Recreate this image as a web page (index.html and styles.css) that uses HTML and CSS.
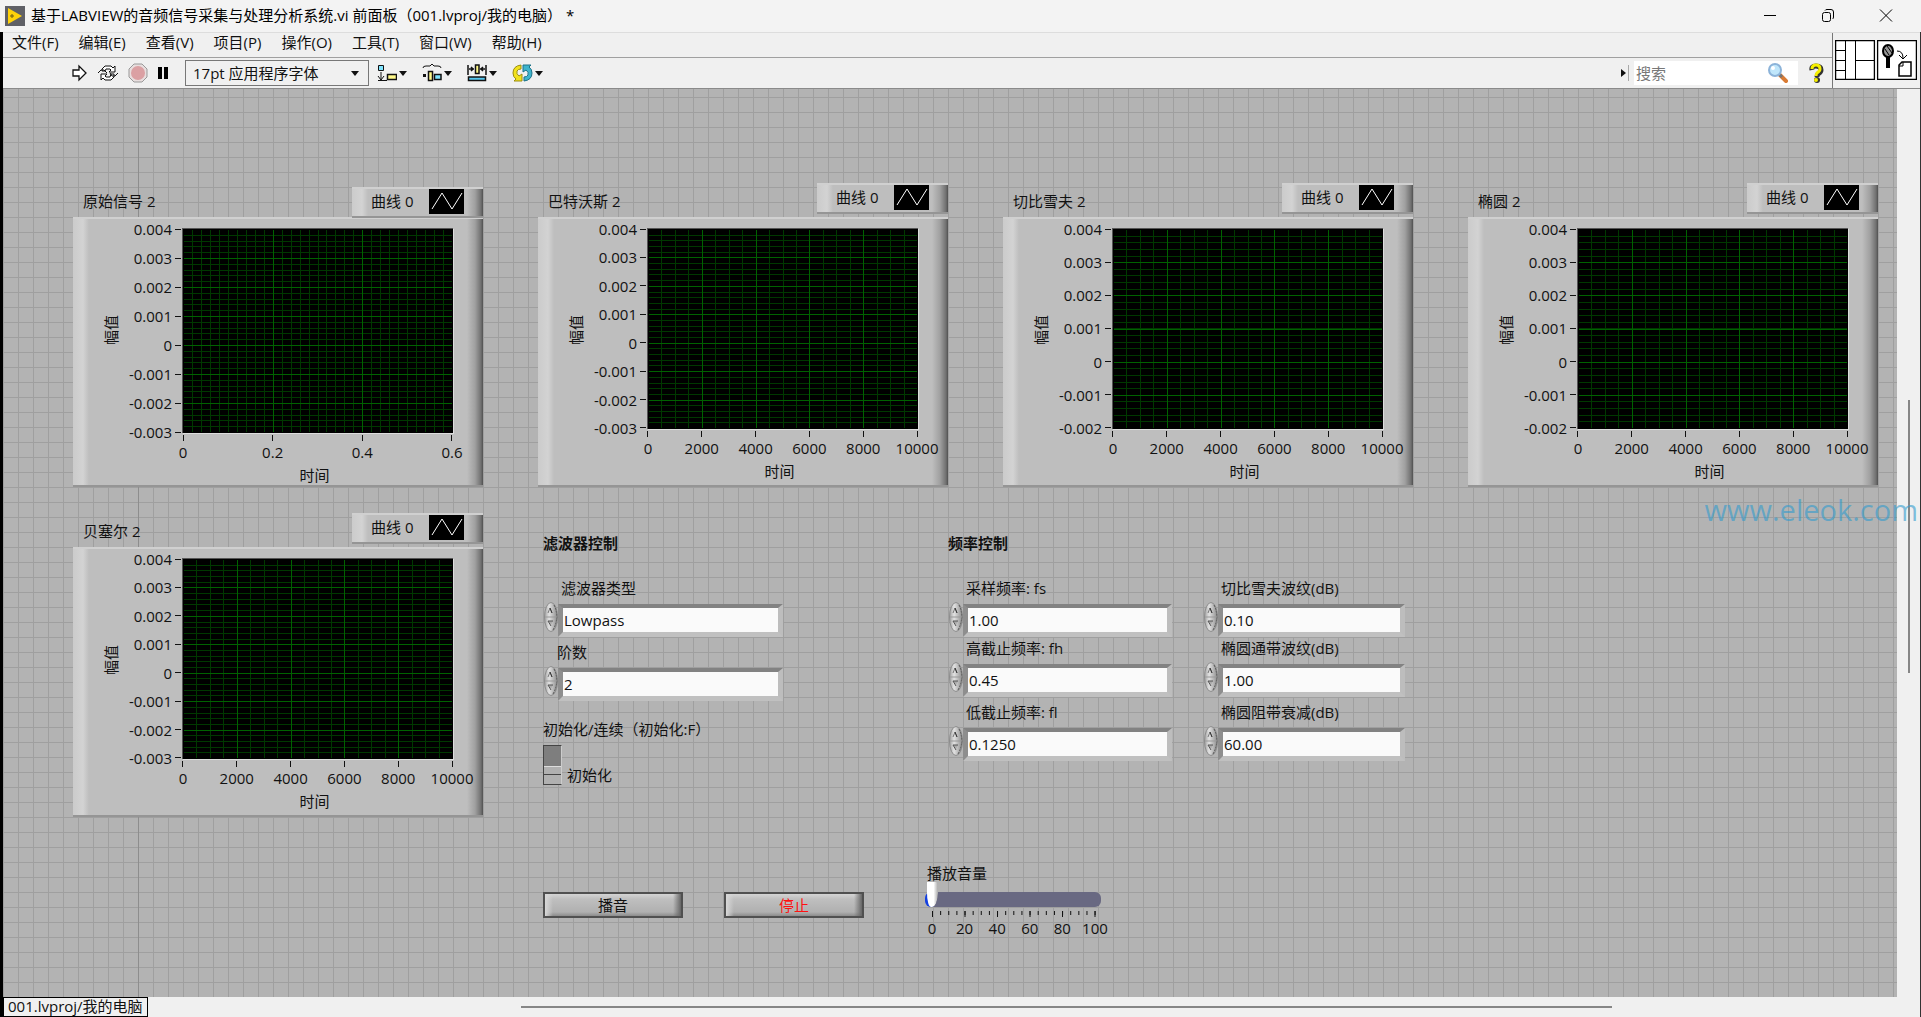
FILE: index.html
```html
<!DOCTYPE html>
<html lang="zh-CN">
<head>
<meta charset="utf-8">
<title>基于LABVIEW的音频信号采集与处理分析系统.vi 前面板</title>
<link rel="stylesheet" href="styles.css">
</head>
<body>
<svg class="defs" aria-hidden="true">
  <defs>
    <symbol id="grid-7x5" viewBox="0 0 270 200" preserveAspectRatio="none">
      <path class="minor" d="M0 100H270" stroke-width="200" stroke-dasharray="1 12.45"/>
      <path class="minor" d="M135 0V200" stroke-width="270" stroke-dasharray="1 4.686"/>
      <path class="major" d="M0 100H270" stroke-width="200" stroke-dasharray="1 52.8"/>
      <path class="major" d="M135 0V200" stroke-width="270" stroke-dasharray="1 27.43"/>
      <path class="edge" d="M0 0H270V200H0Z"/>
    </symbol>
    <symbol id="grid-6x5" viewBox="0 0 270 200" preserveAspectRatio="none">
      <path class="minor" d="M0 100H270" stroke-width="200" stroke-dasharray="1 12.45"/>
      <path class="minor" d="M135 0V200" stroke-width="270" stroke-dasharray="1 5.633"/>
      <path class="major" d="M0 100H270" stroke-width="200" stroke-dasharray="1 52.8"/>
      <path class="major" d="M135 0V200" stroke-width="270" stroke-dasharray="1 32.17"/>
      <path class="edge" d="M0 0H270V200H0Z"/>
    </symbol>
    <symbol id="grid-7x3" viewBox="0 0 270 204" preserveAspectRatio="none">
      <path class="minor" d="M0 102H270" stroke-width="204" stroke-dasharray="1 7.967"/>
      <path class="minor" d="M135 0V204" stroke-width="270" stroke-dasharray="1 4.8"/>
      <path class="major" d="M0 102H270" stroke-width="204" stroke-dasharray="1 88.67"/>
      <path class="major" d="M135 0V204" stroke-width="270" stroke-dasharray="1 28"/>
      <path class="edge" d="M0 0H270V204H0Z"/>
    </symbol>
    <symbol id="swatch" viewBox="0 0 35 25">
      <path d="M0 0H35V25H0z" fill="#000"/>
      <path d="M3 20L13 4L23 20L33 4" fill="none" stroke="#fff" stroke-width="1"/>
    </symbol>
    <linearGradient id="knob" x1="0" x2="1" y1="0" y2="0">
      <stop offset="0" stop-color="#a0a0a0"/><stop offset=".35" stop-color="#e2e2e2"/><stop offset="1" stop-color="#8c8c8c"/>
    </linearGradient>
    <symbol id="spinner" viewBox="0 0 15 30">
      <ellipse cx="8" cy="15" rx="6.500" ry="14.500" fill="url(#knob)" stroke="#8c8c8c"/>
      <path d="M11 3Q17 15 10 28" fill="none" stroke="#555" stroke-width="1" stroke-dasharray="2 1"/>
      <path d="M2 15H14" stroke="#999"/>
      <path d="M5 11L7 6L9 11" fill="none" stroke="#777"/>
      <path d="M7 6L9 11" stroke="#333"/>
      <path d="M5 19H10L8 23Z" fill="#aaa"/>
      <path d="M5 19H10M5 19L8 24" fill="none" stroke="#555"/>
    </symbol>
    <symbol id="caret" viewBox="0 0 8 5"><path d="M0 0H8L4 5Z" fill="#111"/></symbol>
  </defs>
</svg>

<header class="titlebar">
  <svg class="titlebar__logo" viewBox="0 0 20 20"><path d="M0 0H20V20H0z" fill="#5f6066"/><path d="M3 2L17 10L3 18Z" fill="#ffd20a"/><path d="M5 10H9M7 8V12" stroke="#6b5a10"/></svg>
  <h1 class="titlebar__text">基于LABVIEW的音频信号采集与处理分析系统.vi 前面板（001.lvproj/我的电脑） *</h1>
  <div class="titlebar__buttons">
    <button type="button" aria-label="最小化"><svg viewBox="0 0 14 14"><path d="M1 6.500H13" stroke="#000" fill="none"/></svg></button>
    <button type="button" aria-label="还原"><svg viewBox="0 0 14 14"><rect x="1.5" y="3.5" width="8" height="9" rx="2" fill="none" stroke="#000"/><path d="M4 1.500Q4.500 .5 6 .5H10Q12.500 .5 12.500 3V8Q12.500 9.500 11.500 10" fill="none" stroke="#000"/></svg></button>
    <button type="button" aria-label="关闭"><svg viewBox="0 0 14 14"><path d="M1 .5L13 12.500M13 .5L1 12.500" stroke="#000" fill="none"/></svg></button>
  </div>
</header>

<div class="window">
  <div class="bars">
    <div class="bars__main">
      <nav class="menu">
        <button type="button">文件(F)</button><button type="button">编辑(E)</button><button type="button">查看(V)</button><button type="button">项目(P)</button><button type="button">操作(O)</button><button type="button">工具(T)</button><button type="button">窗口(W)</button><button type="button">帮助(H)</button>
      </nav>
      <div class="toolbar">
        <div class="toolbar__run">
          <button type="button" aria-label="运行"><svg width="16" height="18" viewBox="0 0 16 18"><path d="M1 6H7V2L14 9L7 16V12H1Z" fill="#fff" stroke="#111" stroke-width="1.300"/></svg></button>
          <button type="button" aria-label="连续运行"><svg width="22" height="18" viewBox="0 0 22 18"><path d="M5 7V5L8 2H14L16 4L18 2V8H12L14 6L13 5H9L8 7Z" fill="#fff" stroke="#111"/><path d="M17 10V13L14 16H8L6 14L4 16V10H10L8 12L9 13H13L14 10Z" fill="#fff" stroke="#111"/><path d="M1 9L4 6H7L10 9M21 9L18 12H15L13 9" fill="none" stroke="#111"/></svg></button>
          <button type="button" aria-label="中止执行"><svg width="20" height="20" viewBox="0 0 20 20"><path d="M6 1H14L19 6V14L14 19H6L1 14V6Z" fill="#e8dede" stroke="#999"/><circle cx="10" cy="10" r="7" fill="#dba0a3"/></svg></button>
          <button type="button" aria-label="暂停"><svg width="12" height="14" viewBox="0 0 12 14"><path d="M1 1H5V13H1zM7 1H11V13H7z" fill="#000"/></svg></button>
        </div>
        <div class="fontpick">
          <select aria-label="字体"><option>17pt 应用程序字体</option></select>
          <svg width="8" height="5"><use href="#caret"/></svg>
        </div>
        <div class="toolbar__arrange">
          <button type="button" aria-label="对齐对象"><svg width="20" height="18" viewBox="0 0 20 18"><path d="M1.500 1.500H6.500V6.500H1.500z" fill="#7fe4ff" stroke="#111"/><path d="M4 8V16M1 12L4 16L7 12M1 16.500H10" stroke="#111" fill="none"/><path d="M10.500 10.500H19.500V15.500H10.500z" fill="#fff98a" stroke="#111" stroke-width="1.500"/></svg><svg width="8" height="5"><use href="#caret"/></svg></button>
          <button type="button" aria-label="分布对象"><svg width="20" height="18" viewBox="0 0 20 18"><path d="M1 4Q1 2 4 2H8L10 0L12 2H16Q19 2 19 4" fill="none" stroke="#111"/><path d="M1 10H4V13H1z" fill="#111"/><path d="M6.500 7.500H10.500V16.500H6.500z" fill="#fff98a" stroke="#111" stroke-width="1.500"/><path d="M12.500 10.500H19V15.500H12.500z" fill="#7fe4ff" stroke="#111" stroke-width="1.500"/></svg><svg width="8" height="5"><use href="#caret"/></svg></button>
          <button type="button" aria-label="调整对象大小"><svg width="20" height="18" viewBox="0 0 20 18"><path d="M1 1V11M19 1V11M2 5H7M18 5H13M4 3L6 5L4 7M16 3L14 5L16 7" fill="none" stroke="#111" stroke-width="1.500"/><path d="M8.500 1H12V9.500H8.500z" fill="#fff98a" stroke="#111" stroke-width="1.500"/><path d="M1.500 13H18.500V16.500H1.500z" fill="#55c8f0" stroke="#111" stroke-width="1.500"/></svg><svg width="8" height="5"><use href="#caret"/></svg></button>
          <button type="button" aria-label="重新排序"><svg width="21" height="20" viewBox="0 0 21 20"><path d="M9 2Q1 3 1 10Q1 14 4 16L2 18H10V11L7 13Q4 11 5 8Q6 6 9 6Z" fill="#f2e21c" stroke="#9a8d10"/><path d="M12 18Q20 17 20 10Q20 6 17 4L19 2H11V9L14 7Q17 9 16 12Q15 14 12 14Z" fill="#3fb4cc" stroke="#1c7288"/></svg><svg width="8" height="5"><use href="#caret"/></svg></button>
        </div>
        <div class="toolbar__search">
          <svg width="5" height="8" viewBox="0 0 5 8"><path d="M0 0L5 4L0 8Z" fill="#111"/></svg>
          <span class="toolbar__rule"></span>
          <div class="search">
            <input type="search" placeholder="搜索" aria-label="搜索">
            <svg width="22" height="22" viewBox="0 0 22 22"><path d="M13 13L19 19" stroke="#d97b34" stroke-width="4" stroke-linecap="round"/><path d="M12 12L15 15" stroke="#777" stroke-width="3"/><circle cx="8" cy="8" r="6" fill="#bfe6fb" stroke="#8cb3d9" stroke-width="2"/><circle cx="6" cy="6" r="2" fill="#fff"/></svg>
          </div>
          <button type="button" aria-label="帮助"><svg width="15" height="20" viewBox="0 0 15 20"><path d="M3 7Q2 3 7 3Q12 3 12 7Q12 9 9 11Q8 12 8 14" fill="none" stroke="#333" stroke-width="5"/><circle cx="8" cy="17" r="3" fill="#333"/><path d="M3 6Q3 2 7 2Q11 2 11 6Q11 8 8 10Q7 11 7 13" fill="none" stroke="#f5ee00" stroke-width="3"/><circle cx="7" cy="17" r="2" fill="#f5ee00"/></svg></button>
        </div>
      </div>
    </div>
    <div class="bars__panes">
      <svg width="40" height="40" viewBox="0 0 40 40"><path d="M.5 .5H39.500V39.500H.5Z" fill="#fff" stroke="#000" stroke-width="1.500"/><path d="M10.500 1V39M20.500 1V39M1 10.500H10M1 20.500H10M1 30.500H10M21 20.500H39" stroke="#000"/></svg>
      <svg width="40" height="40" viewBox="0 0 40 40"><path d="M.5 .5H39.500V39.500H.5Z" fill="#fff" stroke="#000" stroke-width="1.500"/><ellipse cx="11" cy="11" rx="5" ry="6" fill="#999" stroke="#000" stroke-width="2"/><path d="M8 9L12 15M10 6L15 13" stroke="#000"/><path d="M11 17V28" stroke="#000" stroke-width="4"/><path d="M20 11Q26 11 26 18M22 15L26 19L30 15" fill="none" stroke="#000"/><path d="M25 22H34V36H22V25Z" fill="#fff" stroke="#000" stroke-width="1.500"/><path d="M26 22V26H22" fill="none" stroke="#000"/></svg>
    </div>
  </div>

  <div class="workspace">
    <main class="panel">
      <section class="chart chart--tall">
        <header class="chart__head"><h2>原始信号 2</h2><div class="legend">曲线 0<svg><use href="#swatch"/></svg></div></header>
        <div class="chart__body">
          <span class="chart__ytitle">幅值</span>
          <ol class="yscale"><li>0.004</li><li>0.003</li><li>0.002</li><li>0.001</li><li>0</li><li>-0.001</li><li>-0.002</li><li>-0.003</li></ol>
          <svg class="plot"><use href="#grid-7x3"/></svg>
          <ol class="xscale"><li>0</li><li>0.2</li><li>0.4</li><li>0.6</li></ol>
          <span class="chart__xtitle">时间</span>
        </div>
      </section>
      <section class="chart">
        <header class="chart__head"><h2>巴特沃斯 2</h2><div class="legend">曲线 0<svg><use href="#swatch"/></svg></div></header>
        <div class="chart__body">
          <span class="chart__ytitle">幅值</span>
          <ol class="yscale"><li>0.004</li><li>0.003</li><li>0.002</li><li>0.001</li><li>0</li><li>-0.001</li><li>-0.002</li><li>-0.003</li></ol>
          <svg class="plot"><use href="#grid-7x5"/></svg>
          <ol class="xscale"><li>0</li><li>2000</li><li>4000</li><li>6000</li><li>8000</li><li>10000</li></ol>
          <span class="chart__xtitle">时间</span>
        </div>
      </section>
      <section class="chart">
        <header class="chart__head"><h2>切比雪夫 2</h2><div class="legend">曲线 0<svg><use href="#swatch"/></svg></div></header>
        <div class="chart__body">
          <span class="chart__ytitle">幅值</span>
          <ol class="yscale"><li>0.004</li><li>0.003</li><li>0.002</li><li>0.001</li><li>0</li><li>-0.001</li><li>-0.002</li></ol>
          <svg class="plot"><use href="#grid-6x5"/></svg>
          <ol class="xscale"><li>0</li><li>2000</li><li>4000</li><li>6000</li><li>8000</li><li>10000</li></ol>
          <span class="chart__xtitle">时间</span>
        </div>
      </section>
      <section class="chart">
        <header class="chart__head"><h2>椭圆 2</h2><div class="legend">曲线 0<svg><use href="#swatch"/></svg></div></header>
        <div class="chart__body">
          <span class="chart__ytitle">幅值</span>
          <ol class="yscale"><li>0.004</li><li>0.003</li><li>0.002</li><li>0.001</li><li>0</li><li>-0.001</li><li>-0.002</li></ol>
          <svg class="plot"><use href="#grid-6x5"/></svg>
          <ol class="xscale"><li>0</li><li>2000</li><li>4000</li><li>6000</li><li>8000</li><li>10000</li></ol>
          <span class="chart__xtitle">时间</span>
        </div>
      </section>
      <section class="chart">
        <header class="chart__head"><h2>贝塞尔 2</h2><div class="legend">曲线 0<svg><use href="#swatch"/></svg></div></header>
        <div class="chart__body">
          <span class="chart__ytitle">幅值</span>
          <ol class="yscale"><li>0.004</li><li>0.003</li><li>0.002</li><li>0.001</li><li>0</li><li>-0.001</li><li>-0.002</li><li>-0.003</li></ol>
          <svg class="plot"><use href="#grid-7x5"/></svg>
          <ol class="xscale"><li>0</li><li>2000</li><li>4000</li><li>6000</li><li>8000</li><li>10000</li></ol>
          <span class="chart__xtitle">时间</span>
        </div>
      </section>

      <form class="controls">
        <section class="group group--filter">
          <h2>滤波器控制</h2>
          <div class="field">
            <label for="type">滤波器类型</label>
            <div class="field__box"><svg><use href="#spinner"/></svg><input id="type" type="text" value="Lowpass"></div>
          </div>
          <div class="field field--apart field--near">
            <label for="order">阶数</label>
            <div class="field__box"><svg><use href="#spinner"/></svg><input id="order" type="text" value="2"></div>
          </div>
          <div class="switch">
            <span id="switch-title">初始化/连续（初始化:F）</span>
            <label><input type="checkbox" aria-describedby="switch-title">初始化</label>
          </div>
        </section>
        <section class="group">
          <h2>频率控制</h2>
          <div class="group__columns">
            <div class="group__column">
              <div class="field">
                <label for="fs">采样频率: fs</label>
                <div class="field__box"><svg><use href="#spinner"/></svg><input id="fs" type="text" value="1.00"></div>
              </div>
              <div class="field">
                <label for="fh">高截止频率: fh</label>
                <div class="field__box"><svg><use href="#spinner"/></svg><input id="fh" type="text" value="0.45"></div>
              </div>
              <div class="field field--apart">
                <label for="fl">低截止频率: fl</label>
                <div class="field__box"><svg><use href="#spinner"/></svg><input id="fl" type="text" value="0.1250"></div>
              </div>
            </div>
            <div class="group__column group__column--db">
              <div class="field">
                <label for="cheb">切比雪夫波纹(dB)</label>
                <div class="field__box"><svg><use href="#spinner"/></svg><input id="cheb" type="text" value="0.10"></div>
              </div>
              <div class="field">
                <label for="pass">椭圆通带波纹(dB)</label>
                <div class="field__box"><svg><use href="#spinner"/></svg><input id="pass" type="text" value="1.00"></div>
              </div>
              <div class="field field--apart">
                <label for="stop">椭圆阻带衰减(dB)</label>
                <div class="field__box"><svg><use href="#spinner"/></svg><input id="stop" type="text" value="60.00"></div>
              </div>
            </div>
          </div>
        </section>
      </form>

      <section class="playback">
        <button class="key" type="button">播音</button>
        <button class="key key--stop" type="button">停止</button>
        <div class="volume">
          <label for="volume">播放音量</label>
          <input id="volume" type="range" min="0" max="100" value="0">
          <svg class="volume__ticks" viewBox="0 0 164 6"><path d="M0 2H164" stroke="#111" stroke-width="4" stroke-dasharray="1 7.130"/><path d="M0 3H164" stroke="#111" stroke-width="6" stroke-dasharray="1 31.500"/></svg>
          <ol class="volume__scale"><li>0</li><li>20</li><li>40</li><li>60</li><li>80</li><li>100</li></ol>
        </div>
      </section>
    </main>
    <div class="vscroll"><span></span></div>
    <footer class="status">
      <span class="status__target">001.lvproj/我的电脑</span>
      <div class="hscroll"><span></span></div>
    </footer>
  </div>
</div>
<p class="watermark">www.eleok.com</p>
</body>
</html>
```

FILE: styles.css
```css
* { box-sizing: border-box; }

body {
  margin: 0;
  min-height: 100vh;
  position: relative;
  display: flex;
  flex-direction: column;
  background: #f0f0f0;
  color: #111;
  font: 15px/20px "Open Sans", "Noto Sans CJK SC", sans-serif;
}

h1, h2, p, ol { margin: 0; padding: 0; font: inherit; list-style: none; }
button, input, select { font: inherit; color: inherit; }
button { padding: 0; border: 0; background: none; }
svg { display: block; flex: none; }
.defs { position: absolute; width: 0; height: 0; }

/* Title bar */
.titlebar {
  display: flex;
  align-items: center;
  height: 32px;
  padding: 0 6px 0 5px;
  background: #f3f3f3;
  color: #000;
}
.titlebar__logo { width: 20px; height: 20px; }
.titlebar__text { margin-left: 6px; padding-bottom: 2px; white-space: pre; }
.titlebar__buttons { display: flex; margin-left: auto; }
.titlebar__buttons button { display: grid; place-items: center; width: 58px; height: 32px; }
.titlebar__buttons svg { width: 14px; height: 14px; }

/* Window frame */
.window {
  flex: 1;
  display: flex;
  flex-direction: column;
  border-left: 3px solid #000;
  border-right: 1px solid #333;
}

/* Menu and toolbar */
.bars { display: flex; border-top: 1px solid #ddd; border-bottom: 1px solid #8a8a8a; }
.bars__main { flex: 1; }
.bars__panes {
  display: flex;
  align-items: flex-start;
  gap: 2px;
  padding: 7px 3px 0 2px;
  border-left: 1px solid #777;
}
.menu {
  display: flex;
  gap: 20px;
  height: 25px;
  padding-left: 9px;
  border-bottom: 1px solid #a0a0a0;
}
.menu button { padding-bottom: 6px; line-height: 18px; }
.toolbar { display: flex; align-items: center; height: 30px; padding-left: 69px; }
.toolbar button { display: flex; align-items: center; }
.toolbar__run { display: flex; align-items: center; gap: 9px; margin-right: 16px; }
.toolbar__arrange { display: flex; gap: 15px; margin-left: 8px; }
.toolbar__arrange button { gap: 2px; }
.fontpick { position: relative; width: 184px; }
.fontpick select {
  appearance: none;
  width: 100%;
  height: 26px;
  padding: 0 7px;
  border: 1px solid #777;
  border-radius: 0;
  background: #f0f0f0;
}
.fontpick svg { position: absolute; right: 10px; top: 11px; }
.toolbar__search { display: flex; align-items: center; margin-left: auto; padding-right: 8px; }
.toolbar__rule { width: 1px; height: 16px; margin: 0 5px 0 2px; background: #aaa; }
.search {
  display: flex;
  align-items: center;
  width: 164px;
  height: 24px;
  padding: 0 9px 0 2px;
  margin-right: 11px;
  background: #fff;
}
.search input { flex: 1; min-width: 0; padding: 0; border: 0; background: none; outline: 0; }
.search input::placeholder { color: #777; }

/* Front panel */
.workspace { flex: 1; display: grid; grid-template: 1fr 20px / minmax(0, 1fr) 23px; }
.panel {
  display: grid;
  grid-template-columns: repeat(4, minmax(0, 1fr));
  align-content: start;
  gap: 26px 55px;
  padding: 94px 19px 40px 70px;
  background:
    linear-gradient(#8d8d8d, #8d8d8d) 135px 0 / 1px 100% no-repeat,
    linear-gradient(to right, #9f9f9f 1px, transparent 1px) 0 0 / 15px 15px,
    linear-gradient(#9f9f9f 1px, transparent 1px) 0 8px / 15px 15px,
    #b3b3b3;
}

.chart__head { display: flex; justify-content: space-between; height: 34px; }
.chart__head h2 { padding: 8px 0 0 10px; }
.legend {
  display: flex;
  align-items: flex-start;
  justify-content: space-between;
  width: 131px;
  height: 31px;
  padding: 0 19px;
  line-height: 24px;
}
.legend svg { width: 35px; height: 25px; }
.chart--tall .legend { margin-top: 4px; }
.legend, .chart__body {
  border-top: 2px solid #d0d0d0;
  border-bottom: 2px solid #959595;
  background: linear-gradient(to right, #cbcbcb, #d3d3d3 10px, #bebebe 16px, #bebebe calc(100% - 16px), #a0a0a0 calc(100% - 8px), #707070 calc(100% - 2px), #505050);
}
.chart__body {
  display: grid;
  grid-template-columns: 20px 61px minmax(0, 1fr);
  grid-template-rows: 201px 31px 20px;
  height: 270px;
  padding: 9px 30px 0 28px;
}
.chart--tall .chart__body { grid-template-rows: 205px 31px 20px; }
.chart__ytitle {
  place-self: start center;
  margin-top: 87px;
  writing-mode: vertical-rl;
  text-orientation: sideways;
  transform: rotate(180deg);
}
.yscale {
  display: flex;
  flex-direction: column;
  justify-content: space-between;
  margin: -9px 0;
}
.yscale li {
  display: flex;
  align-items: center;
  justify-content: flex-end;
  gap: 3px;
  padding-right: 1px;
}
.yscale li::after { content: ""; width: 6px; height: 1px; background: #111; }
.plot {
  width: 100%;
  height: 100%;
  border: solid #555;
  border-width: 1px 0 0 1px;
  background: #000;
  box-shadow: 1px 1px #ddd;
}
.minor, .major, .edge { fill: none; stroke: #003800; shape-rendering: crispEdges; }
.major { stroke: #006200; }
.edge { stroke: #000; stroke-width: 2px; }
.xscale {
  grid-column: 3;
  display: flex;
  justify-content: space-between;
  margin: 0 -26px;
  padding-top: 2px;
}
.xscale li { width: 54px; text-align: center; }
.xscale li::before {
  content: "";
  display: block;
  width: 1px;
  height: 6px;
  margin: 0 auto 1px;
  background: #111;
}
.chart__xtitle { grid-column: 3; padding: 1px 6px 0 0; text-align: center; }

/* Parameter controls */
.controls {
  grid-column: 2 / -1;
  display: flex;
  align-items: flex-start;
  gap: 165px;
  padding: 20px 0 0 5px;
}
.group h2 { margin-bottom: 25px; font-weight: 700; }
.group--filter { width: 240px; }
.group__columns { display: flex; gap: 31px; }
.group__column { width: 224px; }
.group__column--db { width: 202px; }
.field { margin-bottom: 1px; }
.field--apart { margin-top: 5px; }
.field label { display: block; padding-left: 18px; }
.field--near label { padding-left: 14px; }
.field__box { display: flex; align-items: flex-start; padding-top: 4px; }
.field__box svg { width: 15px; height: 30px; }
.field__box input {
  flex: 1;
  min-width: 0;
  height: 33px;
  margin-top: 2px;
  padding: 0 1px 1px;
  border: solid;
  border-width: 4px 5px 5px;
  border-color: #828282 #bdbdbd #c0c0c0 #8e8e8e;
  background: #fafafa;
}
.switch { padding-top: 17px; }
.switch label { display: flex; align-items: flex-end; gap: 5px; margin-top: 6px; }
.switch input {
  appearance: none;
  width: 19px;
  height: 40px;
  margin: 0;
  border: 1px solid #444;
  border-right-color: #ccc;
  background:
    linear-gradient(#444, #444) 0 28px / 100% 1px no-repeat,
    linear-gradient(#ddd, #ddd) 0 20px / 100% 1px no-repeat,
    linear-gradient(#7e7e7e 20px, #b0b0b0 20px);
}

/* Playback */
.playback {
  grid-column: 2 / -1;
  display: flex;
  align-items: flex-start;
  gap: 41px;
  padding: 21px 0 0 5px;
}
.key {
  width: 140px;
  height: 26px;
  margin-top: 28px;
  border: 2px solid #505050;
  background:
    linear-gradient(to right, #d8d8d8, transparent 8px, transparent calc(100% - 8px), #666),
    linear-gradient(#d4d4d4, #bfbfbf 5px, #b0b0b0 18px, #8c8c8c);
  line-height: 20px;
}
.key--stop { color: #f11; }
.volume { width: 176px; margin-left: 20px; }
.volume label { display: block; padding-left: 2px; line-height: 18px; }
.volume input {
  appearance: none;
  display: block;
  width: 100%;
  height: 25px;
  margin: 0 0 4px;
  background: none;
}
.volume input::-webkit-slider-runnable-track {
  height: 15px;
  margin-top: 10px;
  border-radius: 6px;
  background: linear-gradient(to right, #1440e0 8px, #696982 8px);
}
.volume input::-webkit-slider-thumb {
  appearance: none;
  width: 13px;
  height: 25px;
  margin-top: -10px;
  border-left: 2px solid transparent;
  border-radius: 2px 2px 6px 6px / 2px 2px 14px 14px;
  background: linear-gradient(to right, #fff 60%, #aaa) padding-box;
}
.volume__ticks { width: 164px; height: 6px; margin-left: 7px; }
.volume__scale { display: flex; justify-content: space-between; margin: 1px -10px 0 -9px; }
.volume__scale li { width: 32px; text-align: center; }

/* Scroll bars and status */
.vscroll {
  display: grid;
  grid-template-rows: 311fr 273fr 324fr;
  justify-content: center;
}
.vscroll span { grid-row: 2; width: 2px; background: #868686; }
.status { grid-column: 1 / -1; display: flex; }
.status__target { padding: 0 4px; border: 1px solid #000; line-height: 17px; }
.hscroll {
  flex: 1;
  display: grid;
  grid-template-columns: 374fr 1091fr 308fr;
  align-content: center;
}
.hscroll span { grid-column: 2; height: 2px; background: #868686; }

.watermark {
  position: absolute;
  right: 3px;
  top: 490px;
  color: rgba(50, 155, 205, .6);
  font-size: 29px;
  line-height: 40px;
  pointer-events: none;
}
```
